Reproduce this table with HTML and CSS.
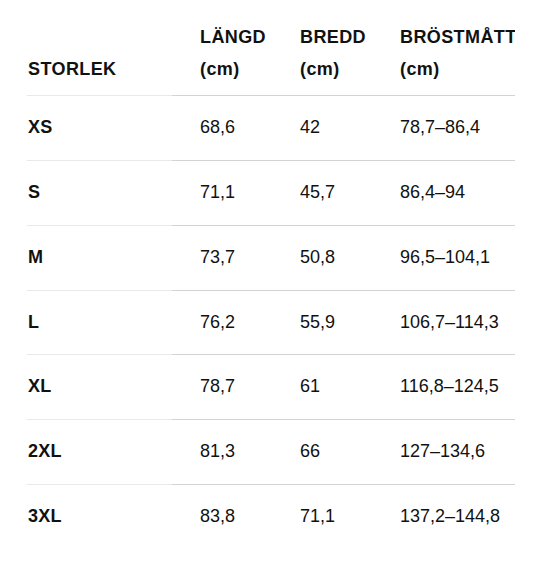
FILE: index.html
```html
<!DOCTYPE html>
<html lang="sv">
<head>
<meta charset="utf-8">
<link rel="stylesheet" href="styles.css">
</head>
<body>
<div class="page">
  <div class="scroller">
    <table class="sizes">
      <colgroup>
        <col class="c-first">
        <col class="c-mid">
        <col class="c-mid">
        <col class="c-last">
      </colgroup>
      <thead>
        <tr>
          <th class="first">STORLEK</th>
          <th>LÄNGD<br>(cm)</th>
          <th>BREDD<br>(cm)</th>
          <th>BRÖSTMÅTT<br>(cm)</th>
        </tr>
      </thead>
      <tbody>
        <tr><th class="first">XS</th><td>68,6</td><td>42</td><td>78,7–86,4</td></tr>
        <tr><th class="first">S</th><td>71,1</td><td>45,7</td><td>86,4–94</td></tr>
        <tr><th class="first">M</th><td>73,7</td><td>50,8</td><td>96,5–104,1</td></tr>
        <tr><th class="first">L</th><td>76,2</td><td>55,9</td><td>106,7–114,3</td></tr>
        <tr><th class="first">XL</th><td>78,7</td><td>61</td><td>116,8–124,5</td></tr>
        <tr><th class="first">2XL</th><td>81,3</td><td>66</td><td>127–134,6</td></tr>
        <tr class="end"><th class="first">3XL</th><td>83,8</td><td>71,1</td><td>137,2–144,8</td></tr>
      </tbody>
    </table>
  </div>
</div>
</body>
</html>
```

FILE: styles.css
```css
html, body {
  margin: 0;
  padding: 0;
  background: #ffffff;
}

body {
  font-family: "Liberation Sans", Arial, sans-serif;
  color: #111111;
  font-size: 18px;
}

.page {
  padding: 8px 28px 0 27px;
}

.scroller {
  width: 488px;
  overflow: hidden;
}

.sizes {
  border-collapse: collapse;
  border-spacing: 0;
  table-layout: fixed;
  width: 545px;
}

.c-first { width: 145px; }
.c-mid { width: 100px; }
.c-last { width: 200px; }

.sizes th,
.sizes td {
  text-align: left;
  vertical-align: middle;
  line-height: 31.7px;
  padding: 16px 0 16px 28px;
  white-space: nowrap;
  border-bottom: 1px solid #d3d3d5;
}

.sizes .first {
  padding-left: 1px;
  border-bottom-color: #e9e9eb;
}

.sizes thead th {
  font-weight: 700;
  letter-spacing: 0.4px;
  vertical-align: bottom;
  padding-top: 14px;
  padding-bottom: 10px;
}

.sizes tbody th {
  font-weight: 700;
  letter-spacing: 0.2px;
}

.sizes td {
  font-weight: 400;
}

.sizes tr.end th,
.sizes tr.end td {
  border-bottom: none;
}
```
